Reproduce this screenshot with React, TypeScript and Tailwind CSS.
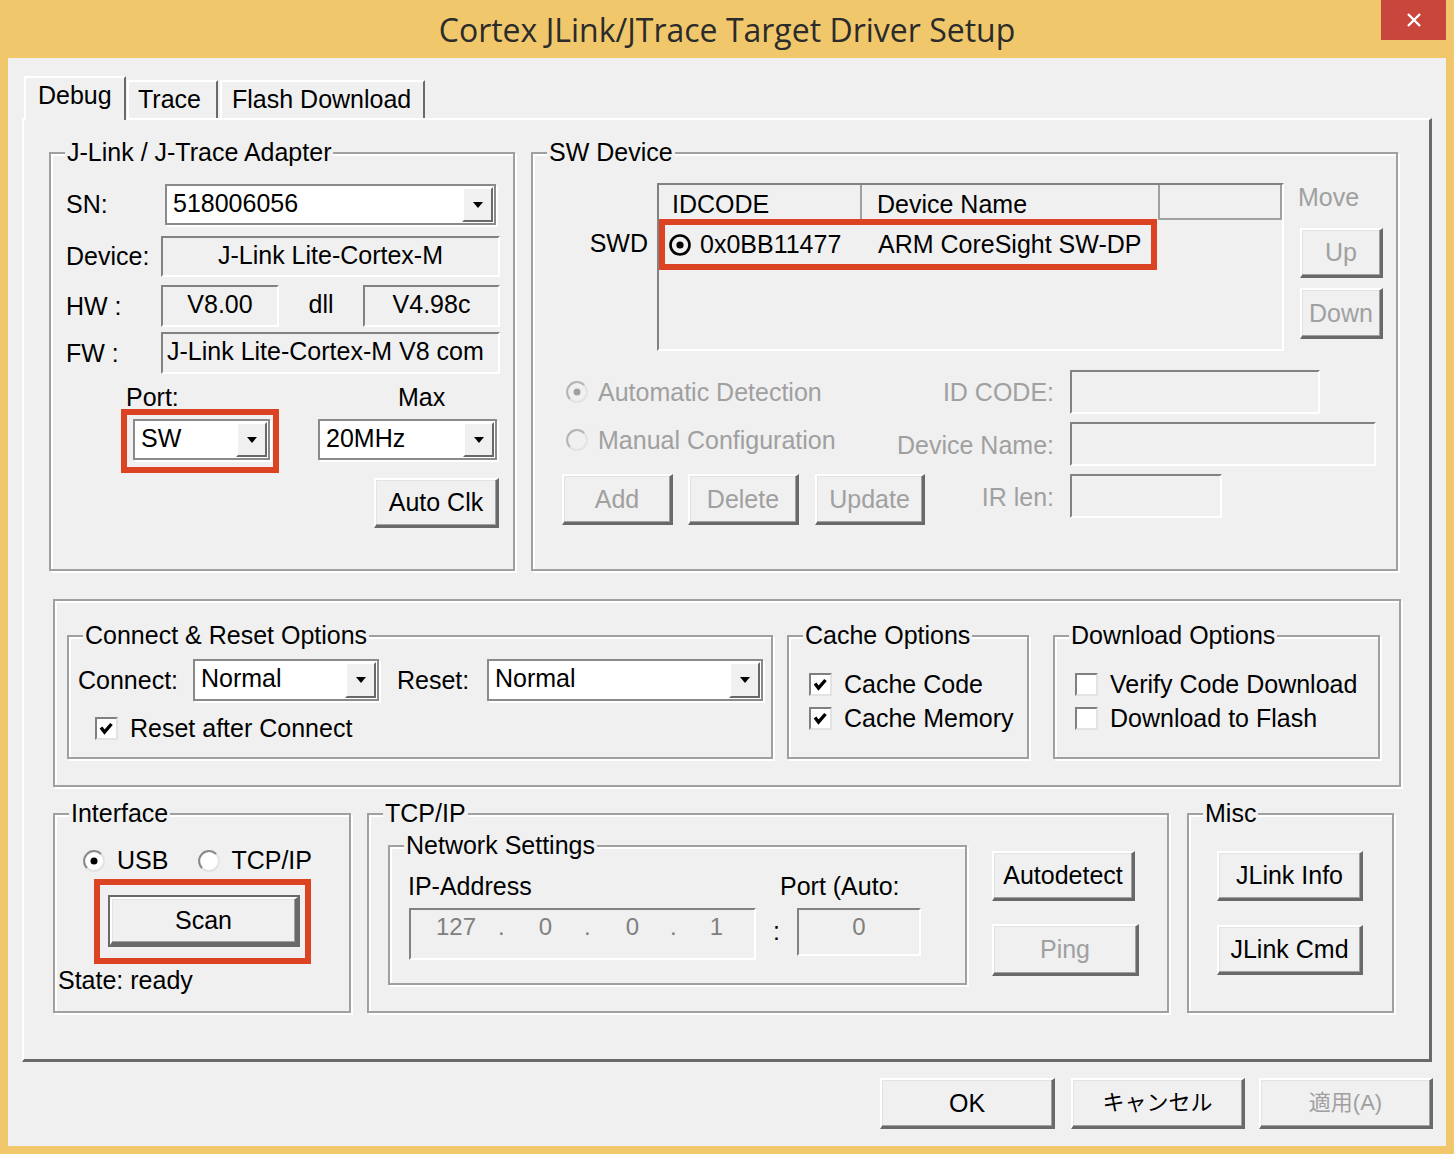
import React from 'react';

const raised =
  'bg-[#F0F0F0] border-t-2 border-l-2 border-r-[3px] border-b-[3px] border-t-white border-l-white border-r-[#696969] border-b-[#696969] shadow-[inset_-1px_-1px_0_#A0A0A0,inset_1px_1px_0_#E3E3E3]';
const sunken = 'border-2 border-t-[#828282] border-l-[#828282] border-r-white border-b-white';

interface BtnProps {
  label: React.ReactNode;
  className?: string;
  disabled?: boolean;
}

const Btn: React.FC<BtnProps> = ({ label, className = '', disabled = false }) => (
  <div
    className={`flex items-center justify-center leading-none ${raised} ${disabled ? 'text-[#A0A0A0]' : ''} ${className}`}
  >
    {label}
  </div>
);

const Combo: React.FC<{ value: string; className?: string }> = ({ value, className = '' }) => (
  <div className={`flex bg-white border-2 border-[#8A8A8A] shadow-[2px_2px_0_#fff] ${className}`}>
    <div className="flex-1 flex items-center pl-[6px] pb-[3px] overflow-hidden whitespace-nowrap leading-none">
      {value}
    </div>
    <div className="w-[31px] m-[1px] flex items-center justify-center bg-[#F0F0F0] border-t-2 border-l-2 border-r-2 border-b-2 border-t-white border-l-white border-r-[#696969] border-b-[#696969]">
      <div className="w-0 h-0 border-l-[5px] border-r-[5px] border-t-[6px] border-l-transparent border-r-transparent border-t-black" />
    </div>
  </div>
);

const Field: React.FC<{ children?: React.ReactNode; className?: string }> = ({ children, className = '' }) => (
  <div className={`flex leading-none ${sunken} ${className}`}>{children}</div>
);

const Check: React.FC<{ checked?: boolean }> = ({ checked = false }) => (
  <div className="w-[23px] h-[23px] shrink-0 bg-white border-2 border-t-[#808080] border-l-[#808080] border-r-[#E3E3E3] border-b-[#E3E3E3] flex items-center justify-center">
    {checked && (
      <svg width="15" height="15" viewBox="0 0 15 15">
        <path d="M2 6.5 L5.5 11 L12.5 3" stroke="#000" strokeWidth="3.4" fill="none" />
      </svg>
    )}
  </div>
);

const Radio: React.FC<{ checked?: boolean; disabled?: boolean }> = ({ checked = false, disabled = false }) => (
  <svg width="24" height="24" viewBox="0 0 24 24" className="shrink-0">
    <circle cx="12" cy="12" r="10" fill={disabled ? '#F0F0F0' : '#fff'} stroke="#E3E3E3" strokeWidth="2" />
    <path d="M4.93 19.07 A10 10 0 0 1 19.07 4.93" fill="none" stroke={disabled ? '#B4B4B4' : '#8A8A8A'} strokeWidth="2" />
    {checked && <circle cx="12" cy="12" r="3.5" fill={disabled ? '#A0A0A0' : '#000'} />}
  </svg>
);

interface GroupProps {
  title?: string;
  className?: string;
  children?: React.ReactNode;
}

// etched group box, title sits on the top line
const Group: React.FC<GroupProps> = ({ title, className = '', children }) => (
  <div className={`relative border-2 border-[#A0A0A0] shadow-[inset_2px_2px_0_#fff,2px_2px_0_#fff] ${className}`}>
    {title && (
      <span className="absolute left-[14px] -top-[16px] bg-[#F0F0F0] px-[2px] leading-[28px] whitespace-nowrap">
        {title}
      </span>
    )}
    {children}
  </div>
);

const App: React.FC = () => {
  return (
    <div className="w-[1454px] h-[1154px] bg-[#F0C86B] flex flex-col font-['Liberation_Sans','Noto_Sans_CJK_JP',sans-serif] text-[25px] text-black overflow-hidden">
      {/* title bar */}
      <div className="relative h-[58px] flex justify-center">
        <div className="pt-[8px] text-[32px] leading-[44px] text-[#2B2B2B] font-['Open_Sans',sans-serif]">
          Cortex JLink/JTrace Target Driver Setup
        </div>
        <div className="absolute right-[8px] top-0 w-[65px] h-[40px] bg-[#C9463D] flex items-center justify-center">
          <svg width="16" height="16" viewBox="0 0 16 16">
            <path d="M2 2 L14 14 M14 2 L2 14" stroke="#fff" strokeWidth="2.4" />
          </svg>
        </div>
      </div>

      {/* client area */}
      <div className="mx-[8px] h-[1088px] bg-[#F0F0F0] flex flex-col">
        {/* tabs */}
        <div className="flex items-end pl-[16px] pt-[18px] h-[60px]">
          <div className="relative z-10 -mb-[2px] w-[102px] h-[44px] bg-[#F0F0F0] border-t-2 border-l-2 border-r-2 border-t-white border-l-white border-r-[#696969] pl-[12px] pt-[2px] leading-[30px]">
            Debug
          </div>
          <div className="ml-[1px] w-[91px] h-[38px] border-t-2 border-l-2 border-r-2 border-t-white border-l-white border-r-[#696969] pl-[9px] pt-[2px] leading-[30px]">
            Trace
          </div>
          <div className="ml-[2px] w-[205px] h-[38px] border-t-2 border-l-2 border-r-2 border-t-white border-l-white border-r-[#696969] pl-[10px] pt-[2px] leading-[30px]">
            Flash Download
          </div>
        </div>

        {/* tab page */}
        <div className="ml-[14px] w-[1410px] h-[944px] border-t-2 border-l-2 border-t-white border-l-white border-r-[3px] border-b-[3px] border-r-[#696969] border-b-[#696969] flex flex-col">
          <div className="flex pt-[32px] pl-[25px]">
            {/* J-Link adapter */}
            <Group title="J-Link / J-Trace Adapter" className="w-[466px] h-[419px] flex flex-col pl-[15px] pt-[30px]">
              <div className="flex items-center h-[41px]">
                <div className="w-[99px] leading-none">SN:</div>
                <Combo value="518006056" className="w-[331px] h-full" />
              </div>
              <div className="mt-[11px] flex items-center h-[41px]">
                <div className="w-[95px] leading-none">Device:</div>
                <Field className="w-[339px] h-full items-center justify-center pb-[3px]">J-Link Lite-Cortex-M</Field>
              </div>
              <div className="mt-[8px] flex items-center h-[42px]">
                <div className="w-[95px] leading-none">HW :</div>
                <Field className="w-[118px] h-full items-center justify-center pb-[3px]">V8.00</Field>
                <div className="w-[84px] text-center leading-none pb-[3px]">dll</div>
                <Field className="w-[137px] h-full items-center justify-center pb-[3px]">V4.98c</Field>
              </div>
              <div className="mt-[5px] flex items-center h-[42px]">
                <div className="w-[95px] leading-none">FW :</div>
                <Field className="w-[339px] h-full items-center pl-[4px] pb-[3px] overflow-hidden whitespace-nowrap">
                  J-Link Lite-Cortex-M V8 com
                </Field>
              </div>
              <div className="mt-[12px] flex items-start">
                <div className="ml-[55px] flex flex-col">
                  <div className="pl-[5px] h-[23px] leading-[23px]">Port:</div>
                  <div className="w-[158px] border-[6px] border-[#DC4322] pl-[6px] pt-[4px] pb-[7px]">
                    <Combo value="SW" className="w-[137px] h-[41px]" />
                  </div>
                </div>
                <div className="ml-[39px] flex flex-col">
                  <div className="pl-[80px] h-[23px] leading-[23px]">Max</div>
                  <Combo value="20MHz" className="mt-[10px] w-[179px] h-[41px]" />
                </div>
              </div>
              <Btn label="Auto Clk" className="self-end mr-[14px] mt-[5px] w-[125px] h-[50px]" />
            </Group>

            {/* SW device */}
            <Group title="SW Device" className="ml-[16px] w-[867px] h-[419px] flex flex-col pt-[29px]">
              <div className="flex items-start">
                <div className="w-[124px] text-right pr-[9px] pt-[46px] leading-[28px]">SWD</div>
                <div className="w-[627px] h-[168px] border-2 border-t-[#828282] border-l-[#828282] border-r-white border-b-white flex flex-col">
                  <div className="flex h-[35px]">
                    <div className="w-[203px] pl-[13px] pt-[4px] leading-[30px] border-r-2 border-r-[#A0A0A0]">IDCODE</div>
                    <div className="w-[298px] pl-[15px] pt-[4px] leading-[30px] border-r-2 border-r-[#A0A0A0]">Device Name</div>
                    <div className="w-[122px] border-b-2 border-r-2 border-b-[#A0A0A0] border-r-[#A0A0A0]" />
                  </div>
                  <div className="-mt-[1px] w-[498px] h-[51px] border-[6px] border-[#DC4322] flex items-center pl-[3px] leading-none">
                    <svg width="24" height="24" viewBox="0 0 24 24" className="shrink-0">
                      <circle cx="12" cy="12" r="9.5" fill="none" stroke="#000" strokeWidth="2.6" />
                      <circle cx="12" cy="12" r="3.6" fill="#000" />
                    </svg>
                    <span className="ml-[8px] w-[178px]">0x0BB11477</span>
                    <span>ARM CoreSight SW-DP</span>
                  </div>
                </div>
                <div className="ml-[14px] flex flex-col">
                  <div className="leading-[28px] text-[#A0A0A0]">Move</div>
                  <Btn label="Up" disabled className="ml-[2px] mt-[17px] w-[83px] h-[50px]" />
                  <Btn label="Down" disabled className="ml-[2px] mt-[10px] w-[83px] h-[51px]" />
                </div>
              </div>

              <div className="mt-[19px] flex items-center h-[44px]">
                <div className="w-[521px] flex items-center justify-between pl-[32px] text-[#A0A0A0] leading-none">
                  <div className="flex items-center">
                    <Radio checked disabled />
                    <span className="ml-[9px]">Automatic Detection</span>
                  </div>
                  <span>ID CODE:</span>
                </div>
                <Field className="ml-[16px] w-[250px] h-[44px]" />
              </div>
              <div className="mt-[8px] flex items-center h-[44px]">
                <div className="w-[521px] flex items-center justify-between pl-[32px] text-[#A0A0A0] leading-none">
                  <div className="flex items-center pb-[8px]">
                    <Radio disabled />
                    <span className="ml-[9px]">Manual Configuration</span>
                  </div>
                  <span className="pt-[2px]">Device Name:</span>
                </div>
                <Field className="ml-[16px] w-[306px] h-[44px]" />
              </div>
              <div className="mt-[8px] flex items-start h-[51px]">
                <div className="w-[521px] h-[51px] flex items-center justify-between pl-[29px] text-[#A0A0A0] leading-none">
                  <div className="flex">
                    <Btn label="Add" disabled className="w-[111px] h-[51px]" />
                    <Btn label="Delete" disabled className="ml-[15px] w-[111px] h-[51px]" />
                    <Btn label="Update" disabled className="ml-[16px] w-[110px] h-[51px]" />
                  </div>
                  <span className="pb-[4px]">IR len:</span>
                </div>
                <Field className="ml-[16px] w-[152px] h-[44px]" />
              </div>
            </Group>
          </div>

          {/* connect / cache / download */}
          <Group className="mt-[28px] ml-[29px] w-[1348px] h-[188px] flex items-start pl-[12px] pt-[34px]">
            <Group title="Connect & Reset Options" className="w-[706px] h-[124px] flex flex-col">
              <div className="mt-[22px] flex items-center h-[42px] leading-none">
                <div className="w-[124px] pl-[9px]">Connect:</div>
                <Combo value="Normal" className="w-[186px] h-full" />
                <div className="w-[108px] pl-[18px]">Reset:</div>
                <Combo value="Normal" className="w-[276px] h-full" />
              </div>
              <div className="mt-[15px] flex items-center pl-[26px] leading-none">
                <Check checked />
                <span className="ml-[12px]">Reset after Connect</span>
              </div>
            </Group>
            <Group title="Cache Options" className="ml-[14px] w-[242px] h-[124px] flex flex-col pl-[20px]">
              <div className="mt-[35px] flex items-center leading-none">
                <Check checked />
                <span className="ml-[12px]">Cache Code</span>
              </div>
              <div className="mt-[9px] flex items-center leading-none">
                <Check checked />
                <span className="ml-[12px]">Cache Memory</span>
              </div>
            </Group>
            <Group title="Download Options" className="ml-[24px] w-[327px] h-[124px] flex flex-col pl-[20px]">
              <div className="mt-[35px] flex items-center leading-none">
                <Check />
                <span className="ml-[12px]">Verify Code Download</span>
              </div>
              <div className="mt-[9px] flex items-center leading-none">
                <Check />
                <span className="ml-[12px]">Download to Flash</span>
              </div>
            </Group>
          </Group>

          {/* interface / tcp / misc */}
          <div className="mt-[26px] ml-[29px] flex items-start">
            <Group title="Interface" className="w-[298px] h-[200px] flex flex-col">
              <div className="mt-[33px] pl-[27px] flex items-center leading-none">
                <Radio checked />
                <span className="ml-[11px]">USB</span>
                <span className="ml-[29px]">
                  <Radio />
                </span>
                <span className="ml-[10px]">TCP/IP</span>
              </div>
              <div className="mt-[6px] ml-[39px] w-[217px] h-[85px] border-[6px] border-[#DC4322] pl-[8px] pt-[10px]">
                <div className="w-[192px] h-[52px] border-2 border-[#696969]">
                  <Btn label="Scan" className="w-full h-full" />
                </div>
              </div>
              <div className="mt-[1px] pl-[3px] leading-[30px]">State: ready</div>
            </Group>

            <Group title="TCP/IP" className="ml-[16px] w-[802px] h-[200px] flex items-start">
              <Group title="Network Settings" className="ml-[19px] mt-[30px] w-[579px] h-[140px] flex flex-col">
                <div className="mt-[25px] flex leading-[28px]">
                  <div className="w-[390px] pl-[18px]">IP-Address</div>
                  <div>Port (Auto:</div>
                </div>
                <div className="mt-[8px] flex items-start pl-[19px]">
                  <Field className="w-[347px] h-[52px] items-start pt-[5px] text-[#808080] text-[24px] leading-[28px]">
                    <span className="ml-[25px]">127</span>
                    <span className="ml-[22px]">.</span>
                    <span className="ml-[34px]">0</span>
                    <span className="ml-[32px]">.</span>
                    <span className="ml-[35px]">0</span>
                    <span className="ml-[31px]">.</span>
                    <span className="ml-[33px]">1</span>
                  </Field>
                  <div className="w-[41px] text-center pt-[9px] leading-[28px]">:</div>
                  <Field className="w-[124px] h-[48px] items-start justify-center pt-[5px] text-[#808080] text-[24px] leading-[28px]">
                    0
                  </Field>
                </div>
              </Group>
              <div className="ml-[25px] mt-[36px] flex flex-col">
                <Btn label="Autodetect" className="w-[143px] h-[50px]" />
                <Btn label="Ping" disabled className="mt-[23px] w-[147px] h-[52px]" />
              </div>
            </Group>

            <Group title="Misc" className="ml-[18px] w-[207px] h-[200px] flex flex-col pl-[28px] pt-[36px]">
              <Btn label="JLink Info" className="w-[146px] h-[50px]" />
              <Btn label="JLink Cmd" className="mt-[24px] w-[146px] h-[50px]" />
            </Group>
          </div>
        </div>

        {/* dialog buttons */}
        <div className="flex justify-end pr-[13px] mt-[16px]">
          <Btn label="OK" className="w-[175px] h-[51px]" />
          <Btn label={<span className="text-[22px]">キャンセル</span>} className="ml-[16px] w-[174px] h-[51px]" />
          <Btn label={<span className="text-[22px]">適用(A)</span>} disabled className="ml-[14px] w-[174px] h-[51px]" />
        </div>
      </div>
    </div>
  );
};

export default App;
